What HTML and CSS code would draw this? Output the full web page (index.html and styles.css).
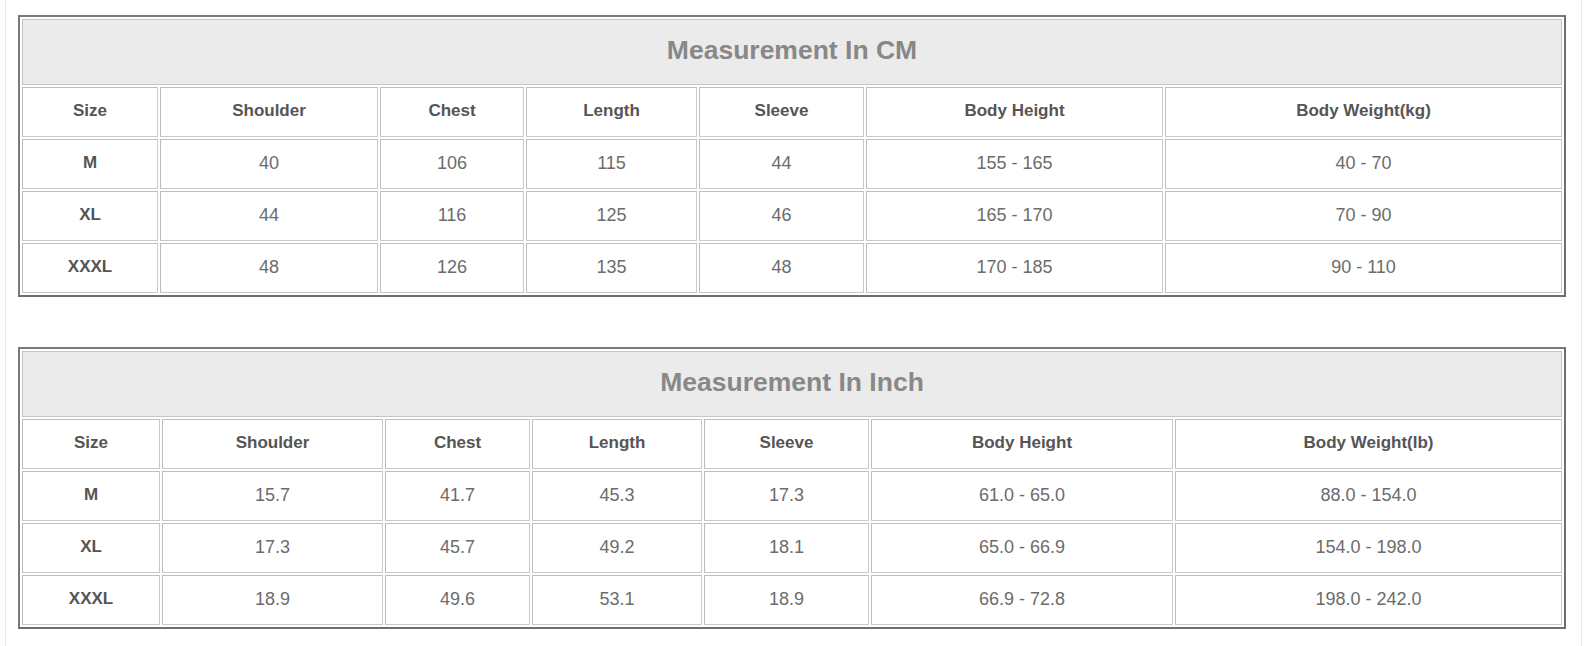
FILE: index.html
```html
<!DOCTYPE html>
<html>
<head>
<meta charset="utf-8">
<link rel="stylesheet" href="styles.css">
</head>
<body>
<div class="page">
  <table class="size-table t-cm">
    <colgroup>
      <col class="c1"><col class="c2"><col class="c3"><col class="c4"><col class="c5"><col class="c6"><col class="c7">
    </colgroup>
    <tr><th class="title" colspan="7">Measurement In CM</th></tr>
    <tr class="head"><th>Size</th><th>Shoulder</th><th>Chest</th><th>Length</th><th>Sleeve</th><th>Body Height</th><th>Body Weight(kg)</th></tr>
    <tr><th>M</th><td>40</td><td>106</td><td>115</td><td>44</td><td>155 - 165</td><td>40 - 70</td></tr>
    <tr><th>XL</th><td>44</td><td>116</td><td>125</td><td>46</td><td>165 - 170</td><td>70 - 90</td></tr>
    <tr><th>XXXL</th><td>48</td><td>126</td><td>135</td><td>48</td><td>170 - 185</td><td>90 - 110</td></tr>
  </table>

  <table class="size-table t-inch">
    <colgroup>
      <col class="c1"><col class="c2"><col class="c3"><col class="c4"><col class="c5"><col class="c6"><col class="c7">
    </colgroup>
    <tr><th class="title" colspan="7">Measurement In Inch</th></tr>
    <tr class="head"><th>Size</th><th>Shoulder</th><th>Chest</th><th>Length</th><th>Sleeve</th><th>Body Height</th><th>Body Weight(lb)</th></tr>
    <tr><th>M</th><td>15.7</td><td>41.7</td><td>45.3</td><td>17.3</td><td>61.0 - 65.0</td><td>88.0 - 154.0</td></tr>
    <tr><th>XL</th><td>17.3</td><td>45.7</td><td>49.2</td><td>18.1</td><td>65.0 - 66.9</td><td>154.0 - 198.0</td></tr>
    <tr><th>XXXL</th><td>18.9</td><td>49.6</td><td>53.1</td><td>18.9</td><td>66.9 - 72.8</td><td>198.0 - 242.0</td></tr>
  </table>
</div>
</body>
</html>
```

FILE: styles.css
```css
html, body {
  margin: 0;
  padding: 0;
  background: #ffffff;
}

.page {
  margin-left: 5px;
  width: 1577px;
  height: 646px;
  box-sizing: border-box;
  border-left: 1px solid #ececec;
  border-right: 1px solid #ececec;
  padding-top: 15px;
  padding-left: 12px;
}

.size-table {
  table-layout: fixed;
  width: 1548px;
  border-collapse: separate;
  border-spacing: 2px;
  border: 2px solid #6e6e6e;
  border-top-color: #7a7a7a;
  border-left-color: #7a7a7a;
  font-family: "Liberation Sans", Arial, sans-serif;
}

.t-inch {
  margin-top: 50px;
}

.size-table th,
.size-table td {
  border: 1px solid #bdbdbd;
  border-right-color: #c9c9c9;
  border-bottom-color: #c9c9c9;
  padding: 0 0 2px 0;
  text-align: center;
  height: 50px;
  box-sizing: border-box;
}

.size-table th {
  font-weight: bold;
  font-size: 17px;
  color: #555555;
}

.size-table td {
  font-weight: normal;
  font-size: 18px;
  color: #6c6c6c;
}

.size-table th.title {
  height: 66px;
  padding: 0 0 4px 0;
  background: #ebebeb;
  font-size: 26.5px;
  color: #888888;
  border-color: #c4c4c4;
}

.t-cm .c1 { width: 136px; }
.t-cm .c2 { width: 218px; }
.t-cm .c3 { width: 144px; }
.t-cm .c4 { width: 171px; }
.t-cm .c5 { width: 165px; }
.t-cm .c6 { width: 297px; }
.t-cm .c7 { width: 397px; }

.t-inch .c1 { width: 138px; }
.t-inch .c2 { width: 221px; }
.t-inch .c3 { width: 145px; }
.t-inch .c4 { width: 170px; }
.t-inch .c5 { width: 165px; }
.t-inch .c6 { width: 302px; }
.t-inch .c7 { width: 387px; }
```
